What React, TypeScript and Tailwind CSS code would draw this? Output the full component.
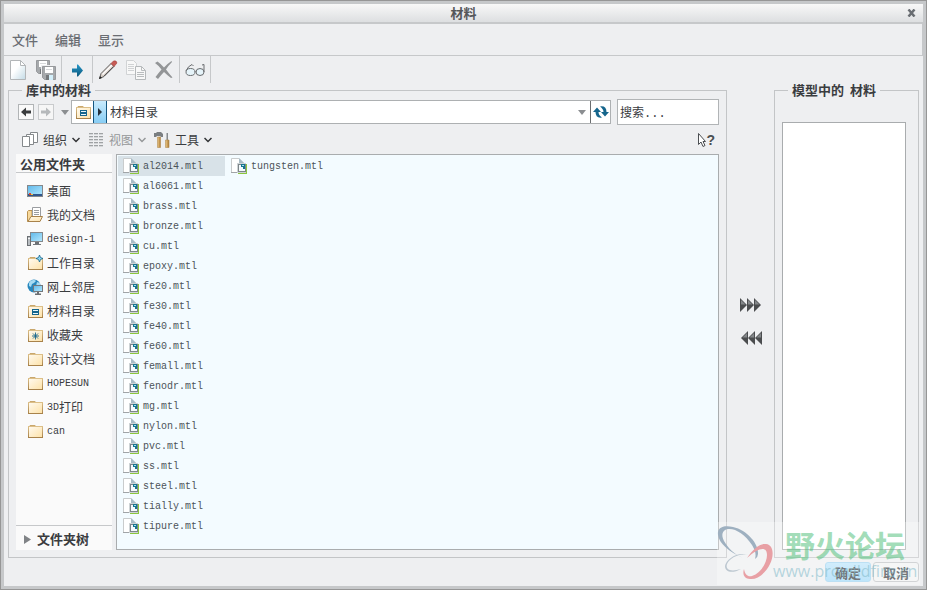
import React from "react";

const FILES = [
  "al2014.mtl", "al6061.mtl", "brass.mtl", "bronze.mtl", "cu.mtl", "epoxy.mtl", "fe20.mtl",
  "fe30.mtl", "fe40.mtl", "fe60.mtl", "femall.mtl", "fenodr.mtl", "mg.mtl", "nylon.mtl",
  "pvc.mtl", "ss.mtl", "steel.mtl", "tially.mtl", "tipure.mtl", "tungsten.mtl",
];

type FolderKind = "desktop" | "documents" | "computer" | "working" | "network" | "catalog" | "favorites" | "folder";

const PLACES: { latin?: string; label?: string; kind: FolderKind }[] = [
  { label: "桌面", kind: "desktop" },
  { label: "我的文档", kind: "documents" },
  { latin: "design-1", kind: "computer" },
  { label: "工作目录", kind: "working" },
  { label: "网上邻居", kind: "network" },
  { label: "材料目录", kind: "catalog" },
  { label: "收藏夹", kind: "favorites" },
  { label: "设计文档", kind: "folder" },
  { latin: "HOPESUN", kind: "folder" },
  { latin: "3D", label: "打印", kind: "folder" },
  { latin: "can", kind: "folder" },
];

function Gradients() {
  return (
    <svg width="0" height="0" className="absolute" aria-hidden="true">
      <defs>
        <linearGradient id="folderFill" x1="0" y1="0" x2="1" y2="1">
          <stop offset="0" stopColor="#fffaf0" />
          <stop offset="1" stopColor="#fde2a8" />
        </linearGradient>
        <linearGradient id="folderEdge" x1="0" y1="0" x2="0" y2="1">
          <stop offset="0" stopColor="#dcbf88" />
          <stop offset="1" stopColor="#a8824a" />
        </linearGradient>
        <linearGradient id="pageFill" x1="0" y1="0" x2="1" y2="1">
          <stop offset="0.4" stopColor="#ffffff" />
          <stop offset="1" stopColor="#c3dbe6" />
        </linearGradient>
        <linearGradient id="screenFill" x1="0" y1="0" x2="1" y2="1">
          <stop offset="0" stopColor="#5fb8ea" />
          <stop offset="1" stopColor="#b5e9ff" />
        </linearGradient>
        <linearGradient id="arrowFill" x1="0" y1="0" x2="0" y2="1">
          <stop offset="0" stopColor="#2596c8" />
          <stop offset="1" stopColor="#0c587c" />
        </linearGradient>
        <linearGradient id="woodFill" x1="0" y1="0" x2="1" y2="0">
          <stop offset="0" stopColor="#f1cf8c" />
          <stop offset="1" stopColor="#a87530" />
        </linearGradient>
      </defs>
    </svg>
  );
}

function FolderShape() {
  return (
    <>
      <path d="M2 4 3 2h5l1.500 2z" fill="#c9a76c" />
      <rect x="1.500" y="3.500" width="14" height="11" fill="url(#folderFill)" stroke="url(#folderEdge)" />
      <path d="M1 14.500h15" stroke="#a8824a" />
    </>
  );
}

function PlaceIcon({ kind }: { kind: FolderKind }) {
  return (
    <svg width="16" height="16" viewBox="0 0 16 16" className="shrink-0" aria-hidden="true">
      {kind === "desktop" && (
        <>
          <rect x="0.500" y="2.500" width="15" height="11" fill="url(#screenFill)" stroke="#85888b" />
          <rect x="1" y="11" width="14" height="2" fill="#30568c" />
          <path d="M2 10h2v2H2z" fill="#e0452f" />
          <path d="M4 11h2v1H4z" fill="#f2c53d" />
        </>
      )}
      {kind === "documents" && (
        <>
          <path d="M0.500 14.500V4.500l1-1H5v8z" fill="#f8d99b" stroke="#b9904f" />
          <path d="M5.500 10V0.500h8V10z" fill="#fff" stroke="#9a9da0" />
          <path d="M7 3.500h5M7 5.500h5M7 7.500h5" stroke="#9a9da0" />
          <path d="M1 14.500 4 9.500h11.500l-2.500 5z" fill="url(#folderFill)" stroke="#a8824a" />
        </>
      )}
      {kind === "computer" && (
        <>
          <rect x="3.500" y="1.500" width="12" height="9" fill="url(#screenFill)" stroke="#85898d" />
          <path d="M8 11h4v2H8z" fill="#6c6f73" />
          <path d="M6 13.500h8" stroke="#74787c" />
          <rect x="0.500" y="5.500" width="3" height="9" fill="#b8bdc1" stroke="#6c7074" />
          <path d="M1 7.500h2" stroke="#f5f5f5" />
        </>
      )}
      {kind === "network" && (
        <>
          <circle cx="7" cy="7" r="6.500" fill="#2787bd" />
          <path d="M2 4c2-4 6-3 7-2L7 4 5 5 4 8 2 7zM10 3l3 1v3H9z" fill="#a7dcf4" />
          <rect x="6.500" y="6.500" width="9" height="6" fill="url(#screenFill)" stroke="#74787c" />
          <path d="M11 13v2M8 15.500h6" stroke="#6c6f73" strokeWidth="2" />
        </>
      )}
      {["working", "catalog", "favorites", "folder"].includes(kind) && <FolderShape />}
      {kind === "working" && (
        <path d="m12.500 0 1 2.500L16 3.500l-2.500 1-1 2.500-1-2.500-2.500-1 2.500-1z" fill="#8ed8f5" stroke="#15658c" strokeWidth="0.800" />
      )}
      {kind === "catalog" && (
        <>
          <rect x="5" y="6" width="7" height="6" fill="#15658c" />
          <path d="M6 7.500h5M6 10.500h5" stroke="#e7f6fc" />
        </>
      )}
      {kind === "favorites" && (
        <path d="M8.500 5.500v7M5 9h7M6 6.500l5 5M11 6.500l-5 5" stroke="#15658c" strokeWidth="0.900" />
      )}
    </svg>
  );
}

function FileIcon() {
  return (
    <svg width="16" height="16" viewBox="0 0 16 16" className="shrink-0" aria-hidden="true">
      <path d="M0.500 0.500H8L12.500 5v9.500H0.500z" fill="#fff" stroke="#c9cccd" />
      <path d="M0 14.500h7" stroke="#a0a4a7" />
      <path d="M8 0V5h5z" fill="#a9bcc5" />
      <path d="M14 6h2v10H7v-2h7z" fill="#8cc63f" />
      <rect x="6" y="5" width="9" height="10" fill="#cfd4d6" />
      <rect x="7.500" y="6.500" width="7" height="7" fill="#f4fafc" stroke="#7d858a" />
      <path d="M10 6h4v5h-2V9h-2z" fill="#17758f" />
      <path d="M11 7h2v1h-2z" fill="#a4e0ef" />
    </svg>
  );
}

function NewIcon() {
  return (
    <svg width="20" height="20" viewBox="0 0 20 20" aria-hidden="true">
      <path d="M2.500 0.500h10l5 5v14h-15z" fill="url(#pageFill)" stroke="#b3b6b8" />
      <path d="M12.500 0.500v5h5z" fill="#fff" stroke="#b3b6b8" />
    </svg>
  );
}

function Floppy() {
  return (
    <>
      <path d="M0.500 0.500h13v13h-11l-2-2z" fill="#a6a9ac" stroke="#97999c" />
      <path d="M3 1h8v6H3z" fill="#fff" />
      <path d="M4 3.500h6" stroke="#d8dadc" />
      <path d="M4 9h7v5H4z" fill="#d3effa" />
      <path d="M4 9h3v5H4z" fill="#74787b" />
    </>
  );
}

function SaveIcon() {
  return (
    <svg width="20" height="20" viewBox="0 0 20 20" aria-hidden="true">
      <Floppy />
      <path d="M5 5h15v15H5z" fill="#eeeff1" />
      <g transform="translate(6 6)"><Floppy /></g>
    </svg>
  );
}

function GoIcon() {
  return (
    <svg width="20" height="20" viewBox="0 0 20 20" aria-hidden="true">
      <path d="M5 8.500h5V4.500h1l5 6-5 6h-1V12.500H5z" fill="url(#arrowFill)" />
    </svg>
  );
}

function PencilIcon() {
  return (
    <svg width="20" height="20" viewBox="0 0 20 20" aria-hidden="true">
      <path d="M1.500 18.500 3 13.500 13 3.500l3 3L6 16.500z" fill="#d9cfc8" stroke="#555" strokeWidth="0.900" />
      <path d="M4 14 13.500 4.500l1 1L5 15z" fill="#fff" />
      <path d="m6 16 9.500-9.500" stroke="#5a5a5a" />
      <path d="m1 19 1-3 2 2z" fill="#222" />
      <path d="m13 3.500 2.500-2.500q3-1 3.500 2L16 6.500z" fill="#c75b55" stroke="#a4403d" strokeWidth="0.600" />
    </svg>
  );
}

function CopyIcon() {
  return (
    <svg width="20" height="20" viewBox="0 0 20 20" aria-hidden="true">
      <path d="M0.500 0.500h7l3 3v11H0.500z" fill="#f8f8f8" stroke="#d1d3d5" />
      <path d="M2 4.500h6M2 6.500h6M2 8.500h6M2 10.500h6" stroke="#d0d2d4" />
      <path d="M9.500 6.500h6l4 4v9h-10z" fill="#f8f8f8" stroke="#b5b8ba" />
      <path d="M15.500 6.500v4h4M11 12.500h7M11 14.500h7M11 16.500h7" fill="none" stroke="#b9bcbe" />
    </svg>
  );
}

function DeleteIcon() {
  return (
    <svg width="20" height="20" viewBox="0 0 20 20" aria-hidden="true">
      <path d="m1 3 2.500-1.500Q7 4 10 7.500 13 4 17.500 1l.5 1Q14 6 12 9.500q3 4 6.500 8l-1.500.5q-4-3-7-6-3 3-6 7L1.500 17q3-4 6-7.500Q4 5 1 3z" fill="#939597" />
    </svg>
  );
}

function GlassesIcon() {
  return (
    <svg width="20" height="20" viewBox="0 0 20 20" aria-hidden="true">
      <g fill="#e6f4fa" stroke="#6a6d70">
        <ellipse cx="5.500" cy="12" rx="4.500" ry="3.500" />
        <ellipse cx="15" cy="12" rx="4" ry="3.500" />
        <path d="M10 11.500q0.500-1 1 0M1 11q2-5 6-6.500l1.500 1.500M19 12V4.500L17 5" fill="none" />
      </g>
    </svg>
  );
}

function StackIcon() {
  return (
    <svg width="16" height="16" viewBox="0 0 16 16" aria-hidden="true">
      <g fill="#fff" stroke="#85898c">
        <path d="M8.500 0.500h7v10h-7z" />
        <path d="M4.500 2.500h7v10h-7z" />
        <path d="M0.500 4.500h7v10h-7z" />
      </g>
    </svg>
  );
}

function GridIcon() {
  return (
    <svg width="16" height="16" viewBox="0 0 16 16" aria-hidden="true">
      {[1, 4, 7, 10, 13].map((y) => (
        <path key={y} d={`M1 ${y}h4v1H1zM6 ${y}h4v1H6zM11 ${y}h4v1h-4z`} fill="#9fa2a4" />
      ))}
      {[2, 5, 8, 11, 14].map((y) => (
        <path key={y} d={`M1 ${y}h4v1H1zM6 ${y}h4v1H6zM11 ${y}h4v1h-4z`} fill="#d5d7d9" />
      ))}
    </svg>
  );
}

function ToolsIcon() {
  return (
    <svg width="16" height="16" viewBox="0 0 16 16" aria-hidden="true">
      <path d="M0 1h2l1-1h4l2 2v3H7L6 4H3L2 5H0z" fill="#7a7e81" />
      <path d="M3.500 5h3v10.500h-3z" fill="url(#woodFill)" stroke="#b08a50" strokeWidth="0.600" />
      <path d="M12.500 1h1.500v7h-1.500z" fill="#85898c" />
      <path d="M11.500 8h3.500v7.500h-3.500z" fill="url(#woodFill)" stroke="#b08a50" strokeWidth="0.600" />
    </svg>
  );
}

function Chevron({ color }: { color: string }) {
  return (
    <svg width="8" height="6" viewBox="0 0 8 6" aria-hidden="true">
      <path d="m0.500 1 3.500 3.500L7.500 1" fill="none" stroke={color} strokeWidth="1.500" />
    </svg>
  );
}

function DownTriangle() {
  return (
    <svg width="8" height="5" viewBox="0 0 8 5" aria-hidden="true">
      <path d="M0 0h8L4 5z" fill="#8b8e91" />
    </svg>
  );
}

function NavArrow({ forward }: { forward?: boolean }) {
  return (
    <svg width="10" height="10" viewBox="0 0 10 10" aria-hidden="true">
      {forward ? (
        <path d="M0 3.500h5V0.500L10 5 5 9.500v-3H0z" fill="#b6b9bb" />
      ) : (
        <path d="M10 3.500H5V0.500L0 5l5 4.500v-3h5z" fill="#3a3c3e" />
      )}
    </svg>
  );
}

function RefreshIcon() {
  return (
    <svg width="16" height="14" viewBox="0 0 16 14" aria-hidden="true">
      <path d="M0 7 4 2.500 8 7H5.500Q5.500 10 9 12.500 2.500 13.500 2.500 7z" fill="#15658c" />
      <path d="M16 7 12 11.500 8 7h2.500Q10.500 4 7 1.500 13.500 0.500 13.500 7z" fill="#15658c" />
    </svg>
  );
}

function HelpCursor() {
  return (
    <svg width="8" height="14" viewBox="0 0 8 14" aria-hidden="true">
      <path d="M0.500 0.500v11L3 9l2 4.500 2-1L5 8.500h2.500z" fill="#fff" stroke="#4c4f52" />
    </svg>
  );
}

function TripleArrow({ left }: { left?: boolean }) {
  return (
    <svg width="22" height="14" viewBox="0 0 22 14" className={left ? "rotate-180" : ""} aria-hidden="true">
      {[0, 7, 14].map((x) => (
        <g key={x} transform={`translate(${x} 0)`}>
          <path d="M0 0v14l7-7z" fill="#4b4d4f" />
          <path d={left ? "M1 7.500v4.500l4.500-4.500z" : "M1 2v4.500h4.500z"} fill="#84878a" />
        </g>
      ))}
    </svg>
  );
}

function ToolGroup({ children }: { children: React.ReactNode }) {
  return <div className="flex items-center gap-2 border-r border-[#c6c8ca] px-[5px] first:pl-1">{children}</div>;
}

function ToolButton({ label, children }: { label: string; children: React.ReactNode }) {
  return (
    <button type="button" aria-label={label} className="size-5">
      {children}
    </button>
  );
}

function Watermark() {
  return (
    <div className="pointer-events-none absolute right-[6px] bottom-1 flex h-[63px] w-[203px] bg-white/30" aria-hidden="true">
      <svg width="56" height="63" viewBox="2 0 56 63" className="shrink-0">
        <path
          d="M28 36C14 30 4 21 3 13 2 5 9 3 18 5c14 3 26 17 25 27q0 3-3 5 2-6-3-14C30 12 20 6 13 7 7 8 6 13 9 19c4 7 10 13 19 17z"
          fill="#9eb0c0"
        />
        <path
          d="M33 33C24 31 15 36 12 42c-2 6 4 8 14 5-9 5-16 3-16-3 1-7 13-15 23-11z"
          fill="#bcc7d0"
        />
        <path
          d="M32 36c6-9 13-15 19-14 8 1 8 12 4 20-4 9-13 16-20 15-5 0-8-4-6-10 1 6 4 8 8 7 8-2 15-13 15-21 0-9-8-8-20 3z"
          fill="#e8a0a5"
        />
      </svg>
      <div className="flex min-w-0 flex-col whitespace-nowrap">
        <span className="pl-3 pt-1 font-['Noto_Sans_CJK_SC',sans-serif] text-[30px] leading-9 font-bold text-[#52c07c]/55">野火论坛</span>
        <span className="font-['Open_Sans',sans-serif] text-base leading-[18px] text-[#7db8c8]/55">www.prowildfire.cn</span>
      </div>
    </div>
  );
}

export default function App() {
  return (
    <div className="relative flex min-h-screen flex-col border border-[#969696] bg-[#c6c8ca] p-[3px] font-['Noto_Sans_CJK_SC',sans-serif] text-xs text-[#3a3c3f]">
      <Gradients />
      <header className="relative flex h-[18px] items-center justify-center bg-linear-to-b from-[#f8f8f8] to-[#dddfe1]">
        <h1 className="text-[13px] leading-4 font-bold text-[#55575a]">材料</h1>
        <button type="button" aria-label="关闭" className="absolute right-[7px]">
          <svg width="9" height="8" viewBox="0 0 9 8" aria-hidden="true">
            <path d="m1.500 0.500 6 7m0-7-6 7" stroke="#696d72" strokeWidth="2.500" />
          </svg>
        </button>
      </header>

      <div className="mt-[2px] flex flex-1 flex-col bg-[#eeeff1]">
        <nav className="flex h-8 items-center gap-[17px] border-r border-b border-[#c6c8ca] pl-2 text-[13px] font-medium text-[#6a6d73]">
          <button type="button">文件</button>
          <button type="button">编辑</button>
          <button type="button">显示</button>
        </nav>

        <div className="flex h-[27px]">
          <ToolGroup>
            <ToolButton label="新建"><NewIcon /></ToolButton>
            <ToolButton label="保存"><SaveIcon /></ToolButton>
          </ToolGroup>
          <ToolGroup>
            <ToolButton label="指定"><GoIcon /></ToolButton>
          </ToolGroup>
          <ToolGroup>
            <ToolButton label="编辑"><PencilIcon /></ToolButton>
            <ToolButton label="复制"><CopyIcon /></ToolButton>
            <ToolButton label="删除"><DeleteIcon /></ToolButton>
          </ToolGroup>
          <ToolGroup>
            <ToolButton label="查看"><GlassesIcon /></ToolButton>
          </ToolGroup>
        </div>

        <main className="flex flex-1 px-1">
          <fieldset className="flex min-w-0 flex-1 flex-col border border-[#c3c5c7] px-[7px] pb-[7px]">
            <legend className="ml-1.5 px-1 text-[13px] leading-[14px] font-bold">库中的材料</legend>

            <div className="flex items-center pt-[2px]">
              <div className="flex items-center gap-1 pl-[2px]">
                <button type="button" aria-label="后退" className="flex size-4 items-center justify-center border border-[#b1b4b6] bg-[#fafafa]"><NavArrow /></button>
                <button type="button" aria-label="前进" className="flex size-4 items-center justify-center border border-[#c9cbcd] bg-[#f6f6f6]"><NavArrow forward /></button>
                <button type="button" aria-label="历史记录" className="flex w-[13px] justify-center"><DownTriangle /></button>
              </div>
              <div className="flex h-6 min-w-0 flex-1 items-stretch border border-[#adb0b2] bg-white">
                <span className="flex w-[21px] items-center justify-center"><PlaceIcon kind="catalog" /></span>
                <button type="button" aria-label="展开" className="flex w-[14px] items-center justify-center border-x border-[#15567f] bg-linear-to-b from-[#c9ebfd] to-[#87cdf4]">
                  <svg width="4" height="8" viewBox="0 0 4 8" aria-hidden="true"><path d="M0 0v8l4-4z" fill="#24313b" /></svg>
                </button>
                <input aria-label="地址" defaultValue="材料目录" className="min-w-0 flex-1 bg-transparent pl-[3px] outline-none" />
                <button type="button" aria-label="地址列表" className="flex w-4 items-center justify-center"><DownTriangle /></button>
                <button type="button" aria-label="刷新" className="flex w-5 items-center justify-center border-l border-[#6a6d70]"><RefreshIcon /></button>
              </div>
              <input
                aria-label="搜索"
                defaultValue="搜索..."
                className="ml-1.5 h-[26px] w-[102px] border border-[#b1b4b6] bg-white px-[2px] font-['Liberation_Mono','Noto_Sans_CJK_SC',monospace] outline-none"
              />
            </div>

            <div className="flex h-[29px] items-center pl-1.5">
              <button type="button" className="flex items-center gap-[5px]"><StackIcon />组织<Chevron color="#303234" /></button>
              <button type="button" className="ml-2 flex items-center gap-[5px] text-[#949799]"><GridIcon />视图<Chevron color="#949799" /></button>
              <button type="button" className="ml-2 flex items-center gap-[5px]"><ToolsIcon />工具<Chevron color="#303234" /></button>
              <button type="button" aria-label="上下文帮助" className="mr-1 ml-auto flex items-center">
                <HelpCursor />
                <span className="font-['Liberation_Sans',sans-serif] text-sm font-bold text-[#4c4f52]">?</span>
              </button>
            </div>

            <div className="flex flex-1 gap-1">
              <aside className="flex w-24 flex-col bg-[#fafafa]">
                <h2 className="h-[19px] border-b border-[#c6c8ca] pl-1 text-[13px] leading-[19px] font-bold">公用文件夹</h2>
                <ul className="pt-1.5">
                  {PLACES.map((place) => (
                    <li key={place.latin ?? place.label}>
                      <button type="button" className="flex h-6 w-full items-center pl-[11px]">
                        <PlaceIcon kind={place.kind} />
                        {place.latin && (
                          <span className="pt-0.5 pl-1 font-['Liberation_Mono',monospace] text-[10px] last:pl-1">{place.latin}</span>
                        )}
                        {place.label && <span className={place.latin ? "" : "pl-1"}>{place.label}</span>}
                      </button>
                    </li>
                  ))}
                </ul>
                <button type="button" className="mt-auto flex h-[25px] items-center gap-1.5 border-t border-[#c6c8ca] pt-0.5 pl-2 text-[13px] font-bold">
                  <svg width="7" height="9" viewBox="0 0 7 9" aria-hidden="true"><path d="M0 0v9l7-4.500z" fill="#808386" /></svg>
                  文件夹树
                </button>
              </aside>

              <div className="min-w-0 flex-1 border border-[#a9acae] bg-[#f3fbff] p-px">
                <ul className="grid grid-flow-col grid-rows-[repeat(19,20px)] auto-cols-[107px] gap-x-px">
                  {FILES.map((name, i) => (
                    <li key={name}>
                      <button
                        type="button"
                        className={
                          "flex h-5 w-full items-center gap-1 pl-[5px] font-['Liberation_Mono',monospace] text-[10px] text-[#4b5359] " +
                          (i === 0 ? "bg-[#d8e2e8]" : "")
                        }
                      >
                        <FileIcon />
                        <span className="pt-0.5">{name}</span>
                      </button>
                    </li>
                  ))}
                </ul>
              </div>
            </div>
          </fieldset>

          <div className="flex w-[47px] flex-col items-center justify-center gap-[19px] pt-[1px]">
            <button type="button" aria-label="添加到模型"><TripleArrow /></button>
            <button type="button" aria-label="从模型移除"><TripleArrow left /></button>
          </div>

          <fieldset className="flex w-[145px] min-w-0 flex-col border border-[#c3c5c7] pt-[25px] pr-3 pb-[7px] pl-[7px]">
            <legend className="ml-1.5 px-1 text-[13px] leading-[14px] font-bold">模型中的&nbsp; 材料</legend>
            <div className="flex-1 border border-[#a9acae] bg-white" />
          </fieldset>
        </main>

        <footer className="flex h-7 items-center justify-end gap-[2px] pr-1 font-bold">
          <button type="button" className="h-5 w-[46px] rounded-[3px] border border-[#9fd3ef] bg-linear-to-b from-[#bde5fb] to-[#a2daf8] text-[13px] leading-none">确定</button>
          <button type="button" className="h-5 w-[46px] rounded-[3px] border border-[#bfc2c4] bg-[#f1f2f3] text-[13px] leading-none">取消</button>
        </footer>
      </div>
      <Watermark />
    </div>
  );
}
